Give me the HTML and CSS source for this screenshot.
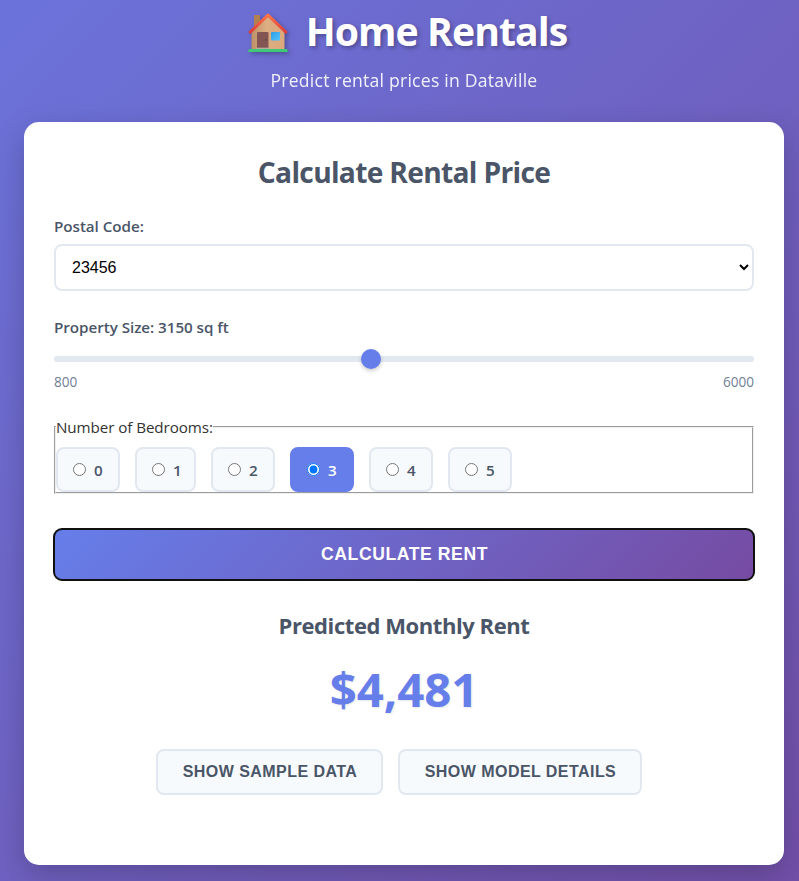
FILE: index.html
```html
<!DOCTYPE html>
<html lang="en">
<head>
<meta charset="utf-8">
<title>Home Rentals</title>
<link rel="stylesheet" href="styles.css">
</head>
<body>
<div class="container">
  <header class="header">
    <h1 class="title">
      <svg class="house" viewBox="0 0 42 42" width="42" height="42" aria-hidden="true">
        <defs>
          <linearGradient id="wall" x1="0" x2="1"><stop offset="0" stop-color="#bd9067"/><stop offset=".45" stop-color="#dcae82"/><stop offset="1" stop-color="#dba87b"/></linearGradient>
          <linearGradient id="roof" x1="0" x2="0" y1="0" y2="1"><stop offset="0" stop-color="#ff7548"/><stop offset="1" stop-color="#dc3838"/></linearGradient>
          <linearGradient id="pane" x1="0" x2="1" y1="0" y2="1"><stop offset="0" stop-color="#2d9de5"/><stop offset="1" stop-color="#55c4fb"/></linearGradient>
        </defs>
        <path d="M7 4.500Q7 4 7.500 4H12.500Q13 4 13 4.500V18H7Z" fill="#b38050"/>
        <path d="M4.500 20L21 5L37.500 20V38H4.500Z" fill="url(#wall)"/>
        <path d="M2.200 22L21 4.200L39.800 22" fill="none" stroke="url(#roof)" stroke-width="3" stroke-linejoin="round"/>
        <rect x="10" y="21" width="11.500" height="17" rx="1" fill="#835653"/>
        <circle cx="18.800" cy="29" r=".8" fill="#55383c"/>
        <rect x="24" y="21" width="9" height="8.500" rx=".7" fill="url(#pane)"/>
        <rect x="9" y="36.700" width="13" height="1.500" fill="#bda9a2"/>
        <path d="M2 38H40L41 41H1Z" fill="#3fc878"/>
      </svg><span class="title-text">Home Rentals</span>
    </h1>
    <p class="subtitle">Predict rental prices in Dataville</p>
  </header>
  <main class="card">
    <h2 class="card-title"><span>Calculate Rental Price</span></h2>
    <form class="form">
      <label class="label postal-label" for="postal"><span>Postal Code:</span></label>
      <select class="select" id="postal"><option>23456</option></select>
      <label class="label size-label" for="size"><span>Property Size: 3150 sq ft</span></label>
      <input class="slider" id="size" type="range" min="800" max="6000" value="3150">
      <div class="range-labels"><span>800</span><span>6000</span></div>
      <fieldset class="bedrooms">
        <legend class="legend">Number of Bedrooms:</legend>
        <div class="options">
          <label class="option"><input type="radio" name="bed"><span>0</span></label>
          <label class="option option-narrow"><input type="radio" name="bed"><span>1</span></label>
          <label class="option"><input type="radio" name="bed"><span>2</span></label>
          <label class="option selected"><input type="radio" name="bed" checked><span>3</span></label>
          <label class="option"><input type="radio" name="bed"><span>4</span></label>
          <label class="option"><input type="radio" name="bed"><span>5</span></label>
        </div>
      </fieldset>
      <button class="calculate" type="button">Calculate Rent</button>
    </form>
    <section class="result">
      <h3 class="result-title">Predicted Monthly Rent</h3>
      <div class="price">$4,481</div>
    </section>
    <div class="actions">
      <button class="secondary sample" type="button">Show Sample Data</button>
      <button class="secondary model" type="button">Show Model Details</button>
    </div>
  </main>
</div>
</body>
</html>
```
FILE: styles.css
```css
* { margin: 0; padding: 0; box-sizing: border-box; }
html { height: 881px; overflow: hidden; }
body {
  height: 881px;
  overflow: hidden;
  background: linear-gradient(135deg, #6b73da 0%, #7250a9 100%);
  font-family: "Open Sans", "Noto Sans", sans-serif;
  font-size: 16px;
  color: #333;
}
.container { width: 760px; margin-left: 24px; }
.header { height: 122px; text-align: center; color: #fff; }
.title {
  display: flex;
  justify-content: center;
  height: 64px;
  padding: 11px 0 0 6px;
  font-size: 39.2px;
  font-weight: 700;
  line-height: 40px;
  white-space: nowrap;
  text-shadow: 2px 2px 4px rgba(0, 0, 0, .3);
}
.house { flex: none; margin-right: 17px; filter: drop-shadow(2px 2px 2px rgba(0, 0, 0, .28)); }
.title-text { letter-spacing: -.95px; }
.subtitle { height: 32px; font-size: 17.6px; line-height: 32px; letter-spacing: .23px; opacity: .9; }
.card {
  height: 743px;
  padding: 30px;
  border-radius: 15px;
  background: #fff;
  box-shadow: 0 10px 30px rgba(0, 0, 0, .2);
}
.card-title {
  height: 42px;
  margin-bottom: 20px;
  font-size: 28.2px;
  line-height: 41px;
  font-weight: 700;
  letter-spacing: -.7px;
  color: #4a5568;
  text-align: center;
  white-space: nowrap;
}
.form { display: flex; flex-direction: column; }
.label { height: 24px; font-size: 15.2px; line-height: 24px; font-weight: 600; color: #4a5568; letter-spacing: -.04px; }
.size-label { line-height: 22px; }
.select {
  height: 47px;
  margin: 6px 0 25px;
  padding: 0 12px;
  border: 2px solid #e2e8f0;
  border-radius: 8px;
  background: #fff;
  font: 16px "Liberation Sans", sans-serif;
  color: #000;
}
.slider {
  appearance: none;
  height: 6px;
  margin: 16px 0 10px;
  border-radius: 3px;
  background: #e2e8f0;
}
.slider::-webkit-slider-thumb {
  appearance: none;
  width: 20px;
  height: 20px;
  border-radius: 50%;
  background: #667eea;
  box-shadow: 0 2px 4px rgba(0, 0, 0, .2);
}
.range-labels { display: flex; justify-content: space-between; height: 19px; font-size: 13.6px; line-height: 19px; color: #718096; }
.bedrooms { height: 77px; margin-top: 26px; border: 2px groove #f0f0f0; }
.legend { height: 20px; line-height: 20px; font-size: 15.2px; letter-spacing: -.08px; }
.options { display: flex; gap: 15px; padding-top: 10px; }
.option {
  display: flex;
  align-items: center;
  width: 64px;
  height: 45px;
  padding-left: 15px;
  border: 2px solid #e2e8f0;
  border-radius: 8px;
  background: #f7fafc;
  color: #4a5568;
  font-size: 15.2px;
  font-weight: 600;
}
.option input { width: 13px; height: 13px; margin-right: 8px; }
.option-narrow { width: 61px; }
.selected { border-color: #667eea; background: #667eea; color: #fff; }
.calculate {
  height: 51px;
  margin-top: 35px;
  border: 0;
  border-radius: 8px;
  outline: 2px solid #101010;
  outline-offset: -1px;
  background: linear-gradient(135deg, #667eea 0%, #764ba2 100%);
  color: #fff;
  font: 700 17.6px "Liberation Sans", sans-serif;
  letter-spacing: .57px;
  text-indent: 1px;
  text-transform: uppercase;
}
.result { height: 169px; padding-top: 29px; text-align: center; color: #4a5568; }
.result-title { font-size: 22px; line-height: 32px; letter-spacing: -.43px; }
.price {
  margin-top: 16px;
  font-size: 47.3px;
  line-height: 64px;
  font-weight: 700;
  color: #667eea;
  text-shadow: 1px 1px 2px rgba(0, 0, 0, .1);
}
.actions { display: flex; gap: 15px; margin-left: 102px; }
.secondary {
  height: 46px;
  border: 2px solid #e2e8f0;
  border-radius: 8px;
  background: #f7fafc;
  color: #4a5568;
  font: 700 16px "Liberation Sans", sans-serif;
  letter-spacing: .45px;
  text-indent: 1px;
  text-transform: uppercase;
  white-space: nowrap;
}
.sample { width: 227px; }
.model { width: 244px; }
```
